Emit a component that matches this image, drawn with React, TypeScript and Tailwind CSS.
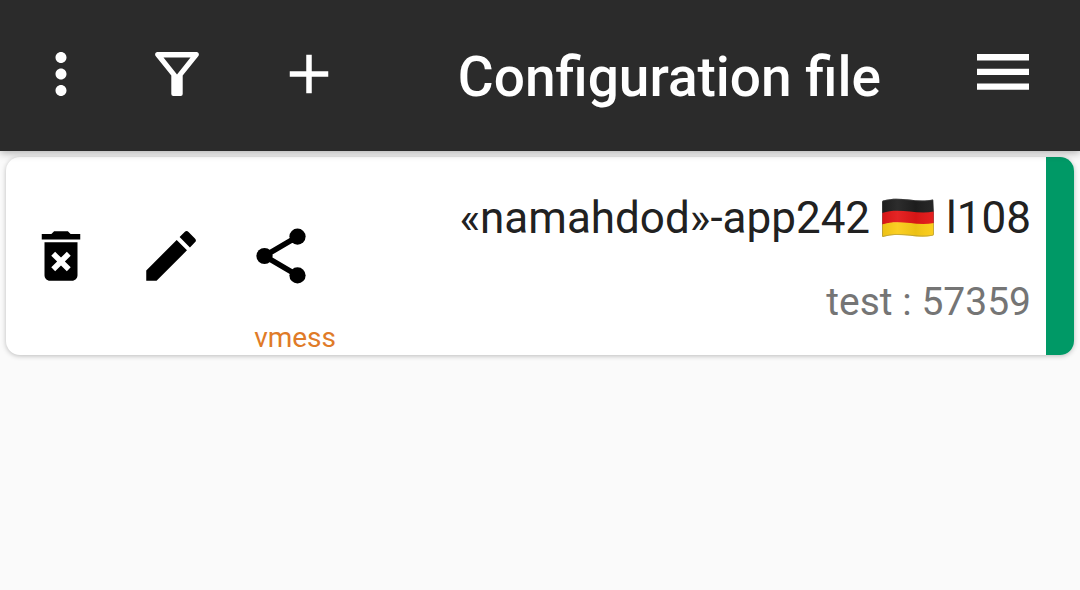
import { MdAdd, MdDeleteForever, MdEdit, MdMoreVert } from "react-icons/md";

const FilterIcon = () => (
  <svg viewBox="0 0 44 44" className="h-11 w-11" aria-hidden="true">
    <path
      fill="currentColor"
      fillRule="evenodd"
      d="M2.500 0H41.500C43.500 0 44.600 2.300 43.400 4L27.700 23.500V42a2 2 0 0 1-2 2H18.300a2 2 0 0 1-2-2V23.500L.6 4C-.6 2.300.5 0 2.500 0ZM8.500 5.600L22 22.500L35.500 5.600Z"
    />
  </svg>
);

const MenuIcon = () => (
  <svg viewBox="0 0 52 36" className="h-9 w-[52px]" aria-hidden="true">
    <path fill="currentColor" d="M0 0h52v6.500H0zM0 14.700h52v6.300H0zM0 29.400h52v6.300H0z" />
  </svg>
);

const ShareIcon = () => (
  <svg viewBox="0 0 24 24" className="size-[66px]" fill="currentColor" aria-hidden="true">
    <path d="M18 4.950L6 12l12 7.050" fill="none" stroke="currentColor" strokeWidth="2" />
    <circle cx="18" cy="4.950" r="2.950" />
    <circle cx="6" cy="12" r="2.950" />
    <circle cx="18" cy="19.050" r="2.950" />
  </svg>
);

const GermanFlag = () => (
  <svg
    viewBox="0 0 52 40"
    className="mx-3 h-10 w-[52px]"
    role="img"
    aria-label="Germany"
  >
    <defs>
      <linearGradient id="wave" x1="0" x2="1" y1="0" y2="0">
        <stop offset="0" stopColor="#000" stopOpacity="0.06" />
        <stop offset="0.3" stopColor="#fff" stopOpacity="0.06" />
        <stop offset="0.65" stopColor="#000" stopOpacity="0.06" />
        <stop offset="1" stopColor="#fff" stopOpacity="0.04" />
      </linearGradient>
    </defs>
    <path fill="#1f1f1f" d="M1 2.500C19-2.500 32 5 51 1.500L52 15C33 19 18 10 0 16V4Q0 3 1 2.500Z" />
    <path fill="#e31717" d="M0 15C18 9 33 17 52 13.500V26C33 29 18 21 0 27Z" />
    <path fill="#fbcd16" d="M0 26.500C18 20.500 33 28.500 52 25V36Q52 37.500 50.500 37.800C33 41 19 33.500 1 39Q0 39 0 38Z" />
    <path fill="url(#wave)" d="M1 2.500C19-2.500 32 5 51 1.500Q52 1.500 52 2.500V36Q52 37.500 50.500 37.800C33 41 19 33.500 1 39Q0 39 0 38V4Q0 3 1 2.500Z" />
    <path
      fill="none"
      stroke="#6b6b6b"
      strokeOpacity="0.35"
      d="M.5 4Q.5 3 1 2.900C19-2 32 5.400 51 2Q51.500 2 51.500 2.500V36Q51.500 37 50.500 37.300C33 40.500 19 33 1 38.500Q.5 38.500.5 38Z"
    />
  </svg>
);

const configs = [{ name: "«namahdod»-app242", suffix: "l108", test: "test : 57359", protocol: "vmess" }];

export default function App() {
  return (
    <div className="min-h-screen bg-[#fafafa] font-[Roboto,sans-serif]">
      <header className="relative flex h-[151px] items-center justify-between bg-[#2b2b2b] pr-[51px] pl-7 text-white shadow-[0_2px_8px_rgba(0,0,0,0.3)]">
        <div className="flex items-center pb-1">
          <button type="button" aria-label="More options">
            <MdMoreVert className="size-[66px]" />
          </button>
          <button type="button" aria-label="Filter" className="ml-[61px]">
            <FilterIcon />
          </button>
          <button type="button" aria-label="Add" className="ml-[77px]">
            <MdAdd className="size-[66px]" />
          </button>
        </div>
        <div className="flex items-center gap-24">
          <h1 className="pt-0.5 text-[55px] leading-[64px] font-medium">Configuration file</h1>
          <button type="button" aria-label="Menu" className="pb-2">
            <MenuIcon />
          </button>
        </div>
      </header>

      <main className="px-1.5 pt-1.5">
        {configs.map((config) => (
          <article
            key={config.name}
            className="flex overflow-hidden rounded-[14px] bg-white shadow-[0_1px_5px_rgba(0,0,0,0.25)]"
          >
            <div className="flex flex-col pt-[66px] pb-px pl-[22px]">
              <div className="flex gap-11">
                <button type="button" aria-label="Delete">
                  <MdDeleteForever className="size-[66px]" />
                </button>
                <button type="button" aria-label="Edit">
                  <MdEdit className="size-[66px]" />
                </button>
                <button type="button" aria-label="Share" className="mr-[22px]">
                  <ShareIcon />
                </button>
              </div>
              <span className="mt-[33px] self-end text-[28px] leading-8 text-[#e07b28]">
                {config.protocol}
              </span>
            </div>
            <div className="flex flex-1 flex-col items-end pt-[35px] pr-[15px]">
              <h2 className="flex items-center text-[44px] leading-[52px] text-[#212121]">
                {config.name}
                <GermanFlag />
                {config.suffix}
              </h2>
              <p className="mt-[34px] text-[39px] leading-[48px] text-[#757575]">{config.test}</p>
            </div>
            <div className="w-7 bg-[#009966]" />
          </article>
        ))}
      </main>
    </div>
  );
}
